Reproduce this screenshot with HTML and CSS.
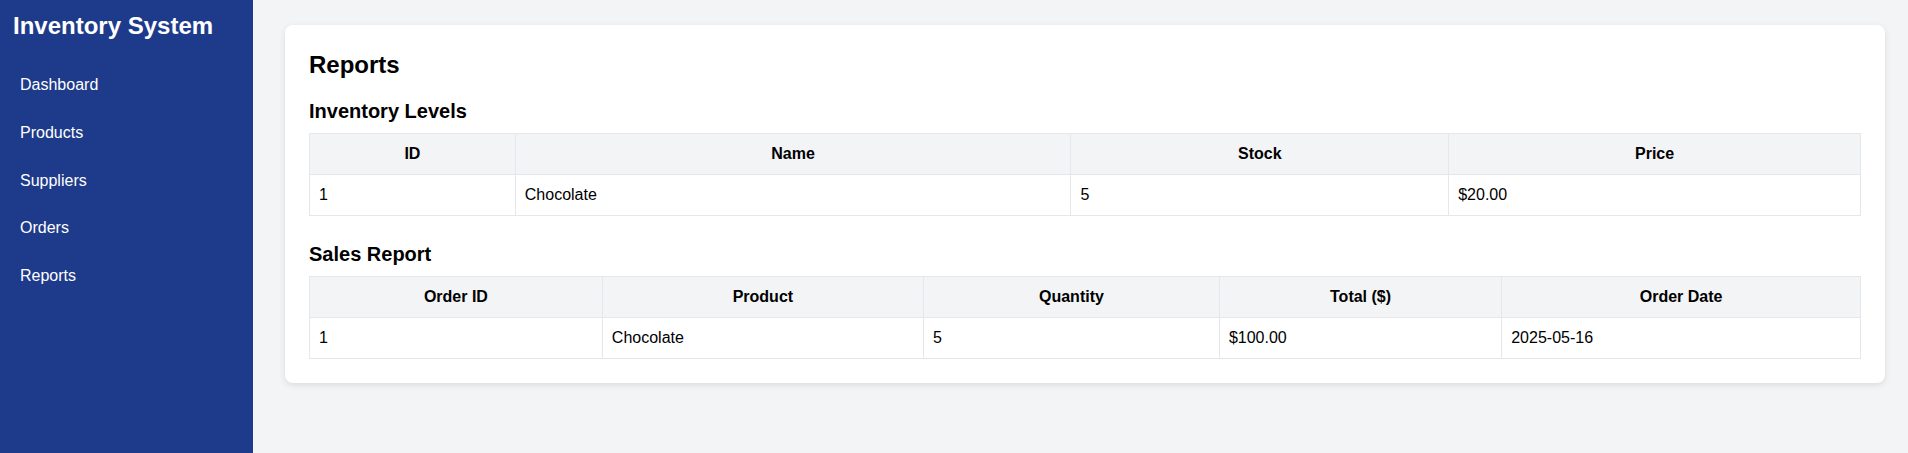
FILE: index.html
```html
<!DOCTYPE html>
<html lang="en">
<head>
<meta charset="utf-8">
<title>Inventory System - Reports</title>
<link rel="stylesheet" href="styles.css">
</head>
<body>
<div class="layout">
  <aside class="sidebar">
    <h1 class="brand">Inventory System</h1>
    <nav>
      <ul class="nav">
        <li><a href="#">Dashboard</a></li>
        <li><a href="#">Products</a></li>
        <li><a href="#">Suppliers</a></li>
        <li><a href="#">Orders</a></li>
        <li><a href="#">Reports</a></li>
      </ul>
    </nav>
  </aside>
  <main class="main">
    <section class="card">
      <h2 class="page-title">Reports</h2>
      <h3 class="section-title">Inventory Levels</h3>
      <table class="data-table inventory">
        <thead>
          <tr><th class="col-id">ID</th><th class="col-name">Name</th><th class="col-stock">Stock</th><th class="col-price">Price</th></tr>
        </thead>
        <tbody>
          <tr><td>1</td><td>Chocolate</td><td>5</td><td>$20.00</td></tr>
        </tbody>
      </table>
      <h3 class="section-title">Sales Report</h3>
      <table class="data-table">
        <thead>
          <tr><th>Order ID</th><th>Product</th><th>Quantity</th><th>Total ($)</th><th>Order Date</th></tr>
        </thead>
        <tbody>
          <tr><td>1</td><td>Chocolate</td><td>5</td><td>$100.00</td><td>2025-05-16</td></tr>
        </tbody>
      </table>
    </section>
  </main>
</div>
</body>
</html>
```
FILE: styles.css
```css
* { box-sizing: border-box; }
html, body {
  margin: 0;
  padding: 0;
  height: 100%;
}
body {
  font-family: "Liberation Sans", Arial, sans-serif;
  font-size: 16px;
  color: #000;
  background: #f3f4f6;
}
.layout {
  display: flex;
  min-height: 100vh;
}
.sidebar {
  width: 253px;
  flex: 0 0 253px;
  background: #1e3a8a;
  color: #fff;
  padding: 12px;
}
.brand {
  margin: 0 0 24px;
  font-size: 24px;
  font-weight: bold;
  line-height: 28px;
  padding-left: 1px;
}
.nav {
  list-style: none;
  margin: 0;
  padding: 0;
}
.nav li { margin-bottom: 5.75px; }
.nav a {
  display: block;
  padding: 12px 8px;
  line-height: 18px;
  color: #fff;
  text-decoration: none;
}
.main {
  flex: 1;
  padding: 25px 23px 25px 32px;
}
.card {
  background: #fff;
  border-radius: 8px;
  box-shadow: 0 2px 6px rgba(0, 0, 0, 0.1);
  padding: 26px 24px 24px;
}
.page-title {
  margin: 0 0 21px;
  font-size: 24px;
  line-height: 28px;
  font-weight: bold;
}
.section-title {
  margin: 0 0 10px;
  font-size: 20px;
  line-height: 23px;
  font-weight: bold;
}
.data-table {
  width: 100%;
  border-collapse: collapse;
}
.data-table.inventory { margin-bottom: 27px; }
.inventory .col-id { width: 13.27%; }
.inventory .col-name { width: 35.82%; }
.inventory .col-stock { width: 24.36%; }
.inventory .col-price { width: 26.55%; }
.data-table th,
.data-table td {
  border: 1px solid #e5e7eb;
  padding: 10px 9px;
  line-height: 20px;
  font-size: 16px;
}
.data-table th {
  background: #f3f4f6;
  font-weight: bold;
  text-align: center;
}
.data-table td { text-align: left; }
```
